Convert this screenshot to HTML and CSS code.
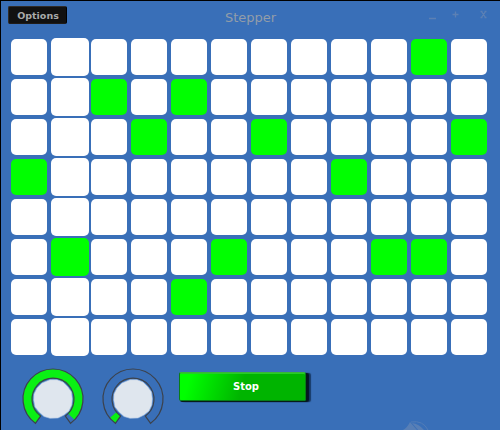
FILE: index.html
```html
<!DOCTYPE html>
<html lang="en">
<head>
<meta charset="utf-8">
<title>Stepper</title>
<link rel="stylesheet" href="styles.css">
</head>
<body>
<div class="window">
  <header class="titlebar">
    <button class="options">Options</button>
    <h1 class="title">Stepper</h1>
    <div class="controls">
      <svg width="60" height="12" viewBox="0 0 60 12" aria-hidden="true">
        <path d="M0 10.500h7M23.500 6.500h6M26.500 3.500v6"/>
        <path class="close" d="M52.500 3.500l4 6M56.500 3.500l-4 6M51.500 3.500h2M55.500 3.500h2M51.500 9.500h2M55.500 9.500h2"/>
      </svg>
    </div>
  </header>
  <main class="grid" id="grid"></main>
  <footer class="footer">
    <svg class="knob" width="64" height="62" viewBox="-32 -31 64 62">
      <path class="level" d="M-17.600 24.300A30 30 0 1 1 21.600 20.800L14.700 14.200A20.500 20.500 0 1 0 -12 16.600Z"/>
      <path class="track" d="M-17.600 24.300A30 30 0 1 1 17.600 24.300L12.400 17.100A21 21 0 1 0 -12.400 17.100Z"/>
      <path class="dial" d="M-3-19.300L4-19.300L10-17L15-12L18.500-7L19.300 0L18.800 6L16 12L11 16L5 19L-3 19.300L-9 17.500L-14 13L-18 8L-19.300 1L-19-5L-16-11L-11-16Z"/>
    </svg>
    <svg class="knob" width="64" height="62" viewBox="-32 -31 64 62">
      <path class="level" d="M-17.600 24.300A30 30 0 0 1 -23 18.800L-16.500 13A21 21 0 0 0 -12.400 17.100Z"/>
      <path class="track" d="M-17.600 24.300A30 30 0 1 1 17.600 24.300L12.400 17.100A21 21 0 1 0 -12.400 17.100Z"/>
      <path class="dial" d="M-3-19.300L4-19.300L10-17L15-12L18.500-7L19.300 0L18.800 6L16 12L11 16L5 19L-3 19.300L-9 17.500L-14 13L-18 8L-19.300 1L-19-5L-16-11L-11-16Z"/>
    </svg>
    <button class="stop">Stop</button>
    <svg class="emblem" width="28" height="9" viewBox="0 0 28 9" aria-hidden="true">
      <path class="fin" d="M0 9Q4 7 7 1L14 9ZM9 2Q16 3 21 9H15Z"/>
      <path class="arc" d="M8 1Q20-1 25 9"/>
    </svg>
  </footer>
</div>
<script src="grid.js"></script>
</body>
</html>
```
FILE: styles.css
```css
* { box-sizing: border-box; }

body {
  margin: 0;
  font-family: "DejaVu Sans", sans-serif;
}

.window {
  width: 500px;
  height: 430px;
  overflow: hidden;
  background: #396fb8;
  border-top: 1px solid #000;
  border-left: 1px solid #000;
}

.titlebar {
  display: grid;
  grid-template-columns: 160px 1fr 160px;
  height: 37px;
  padding: 5px 7px 0;
}

.options {
  width: 59px;
  height: 18px;
  padding: 0 0 0 1px;
  border: 1px solid #302c29;
  border-right-color: #000;
  border-bottom-color: #201c18;
  border-radius: 2px;
  background: #111;
  color: #aaa;
  font: bold 9.5px/15px "DejaVu Sans", sans-serif;
}

.title {
  margin: 3px 0 0;
  color: #929da9;
  font-size: 13px;
  font-weight: normal;
  line-height: 18px;
  text-align: center;
}

.controls {
  display: flex;
  justify-content: flex-end;
  padding: 2px 4px 0 0;
}

.controls path {
  fill: none;
  stroke: #5c80b4;
  stroke-width: 1.3;
}

.grid {
  display: grid;
  grid-template-columns: repeat(12, 36px);
  grid-auto-rows: 36px;
  gap: 4px;
  margin: 1px 0 0 10px;
}

.cell {
  border-radius: 5px;
  background: #fff;
}

.cell.on { background: #0f0; }

.cell.playing {
  width: 38px;
  height: 38px;
  margin-top: -1px;
}

.footer {
  display: flex;
  align-items: flex-start;
  height: 75px;
  padding: 13px 0 0 20px;
}

.knob { margin-right: 16px; }

.level { fill: #0af014; }

.track {
  fill: none;
  stroke: #3c424c;
  stroke-width: 1.2;
}

.dial {
  fill: #dfe6ee;
  stroke: #a9c3e2;
  stroke-width: .6;
}

.stop {
  width: 127px;
  height: 29px;
  margin: 4px 0 0 -2px;
  padding: 0 0 0 7px;
  border: 1px solid #087d18;
  border-top-color: #36b536;
  border-radius: 2px;
  background: linear-gradient(105deg, #0f0 8%, #00b400 50%);
  box-shadow: inset 0 1px 0 #28cc28, 1px 1px 0 #061c18, 3px 1px 1px #051525, 5px 1px 1px #183a68;
  color: #fff;
  font: bold 10px/28px "DejaVu Sans", sans-serif;
}

.emblem {
  align-self: flex-end;
  margin-left: 97px;
}

.fin { fill: #587fb6; }

.arc {
  fill: none;
  stroke: #527cb7;
}
```
FILE: grid.js
```js
const pattern = [
  "..........#.",
  "..#.#.......",
  "...#..#....#",
  "#.......#...",
  "............",
  ".#...#...##.",
  "....#.......",
  "............"
];
const playingColumn = 1;
const grid = document.getElementById("grid");

for (const row of pattern) {
  [...row].forEach((step, column) => {
    const cell = document.createElement("div");
    cell.className = "cell";
    cell.classList.toggle("on", step === "#");
    cell.classList.toggle("playing", column === playingColumn);
    grid.append(cell);
  });
}
```
